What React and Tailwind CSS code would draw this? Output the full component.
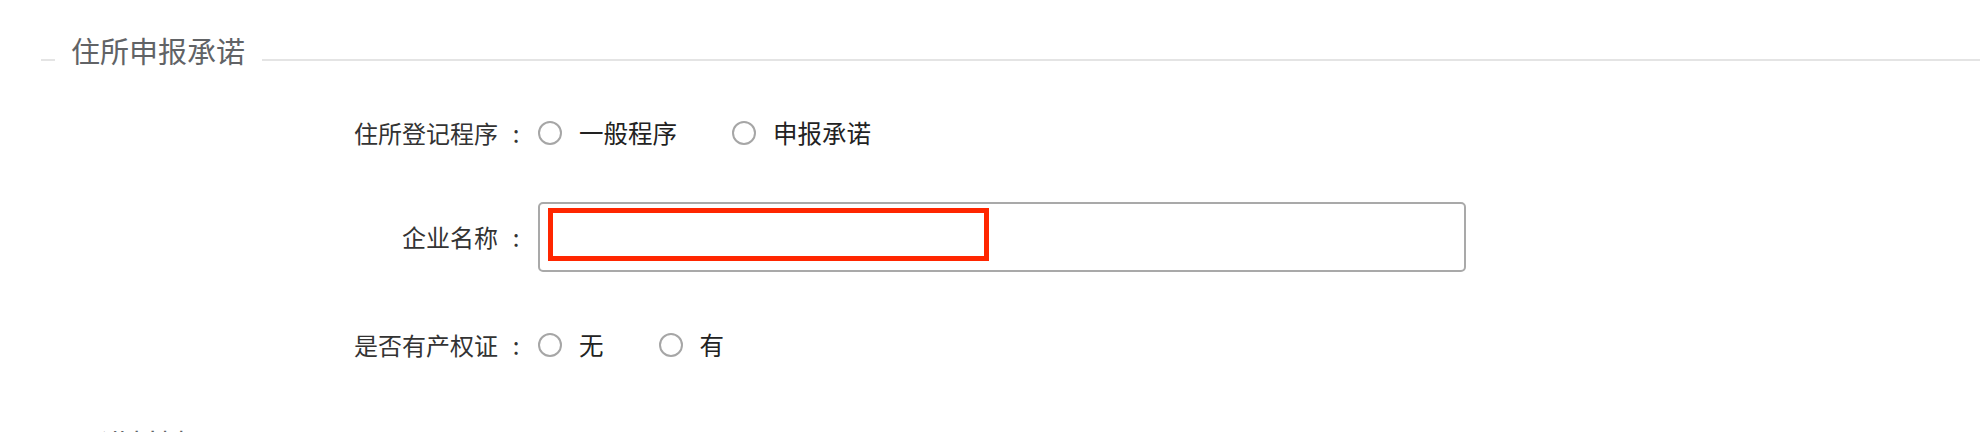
export default function App() {
  const Radio = ({ label, last }) => (
    <div className={"flex items-center " + (last ? "" : "mr-[55px]")}>
      <span className="box-border h-[24px] w-[24px] rounded-full border-2 border-[#a6a6a6] bg-white" />
      <span className="ml-[17px] text-[24.5px] text-[#222]">{label}</span>
    </div>
  );

  const Title = ({ text, className }) => (
    <div className={"flex h-[40px] items-center " + (className || "")}>
      <div className="ml-[41px] h-[2px] w-[14px] bg-[#e4e4e4]" />
      <div className="mb-[20px] ml-[16px] mr-[17px] text-[29px] leading-none text-[#616366]">{text}</div>
      <div className="h-[2px] flex-1 bg-[#e4e4e4]" />
    </div>
  );

  const Label = ({ text }) => (
    <div className="flex w-[538px] items-center justify-end text-[24px] text-[#333]">
      <span>{text}</span>
      <span className="mr-[4px] w-[36px] text-center">:</span>
    </div>
  );

  return (
    <div className="h-[432px] w-[1980px] overflow-hidden bg-white font-['Noto_Sans_CJK_SC',sans-serif]">
      <div className="pt-[40px]">
        <Title text="住所申报承诺" />

        <div className="mt-[33px] flex h-[40px] items-center leading-none">
          <Label text="住所登记程序" />
          <div className="flex items-center">
            <Radio label="一般程序" />
            <Radio label="申报承诺" last />
          </div>
        </div>

        <div className="mt-[49px] flex h-[70px] items-center leading-none">
          <Label text="企业名称" />
          <div className="relative box-border h-[70px] w-[928px] rounded-[5px] border-2 border-[#a9a9a9] bg-white">
            <div className="absolute left-[8px] top-[4px] box-border h-[53px] w-[441px] border-[5px] border-[#ff2600]" />
          </div>
        </div>

        <div className="mt-[53px] flex h-[40px] items-center leading-none">
          <Label text="是否有产权证" />
          <div className="flex items-center">
            <Radio label="无" />
            <Radio label="有" last />
          </div>
        </div>

        <Title text="承诺材料" className="mt-[68px]" />
      </div>
    </div>
  );
}
